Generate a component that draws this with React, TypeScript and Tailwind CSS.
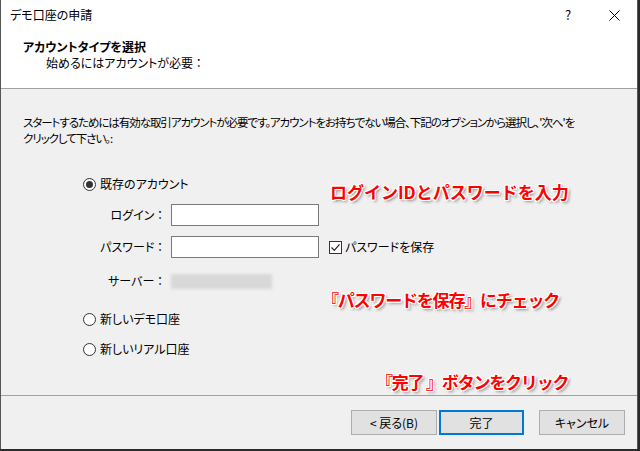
import React from "react";

const font = { fontFamily: '"Noto Sans CJK JP", "Noto Sans", sans-serif' };

function Radio({ checked, label }: { checked?: boolean; label: string }) {
  return (
    <div className="flex items-center gap-[4px] h-[16px]">
      <div className="w-[13px] h-[13px] rounded-full border border-[#333] bg-white flex items-center justify-center">
        {checked && <div className="w-[7px] h-[7px] rounded-full bg-[#333]" />}
      </div>
      <span className="text-[12px] text-black leading-[16px]">{label}</span>
    </div>
  );
}

const ann =
  "absolute text-[#ff0000] font-bold text-[17px] leading-[20px] whitespace-nowrap [text-shadow:1px_0_0_#fff,-1px_0_0_#fff,0_1px_0_#fff,0_-1px_0_#fff,1px_1px_0_#fff,-1px_-1px_0_#fff,1px_-1px_0_#fff,-1px_1px_0_#fff,2px_2px_3px_#888]";

export default function App() {
  return (
    <div className="w-[640px] h-[451px] bg-[#2a2a2a] relative overflow-hidden" style={font}>
      <div className="absolute left-0 top-0 w-[638px] h-[449px] border-l border-r border-[#555] bg-[#f0f0f0] flex flex-col [font-feature-settings:'palt']">
        {/* title bar */}
        <div className="h-[30px] bg-white flex items-center pl-[9px] shrink-0">
          <span className="text-[12px] text-black">デモ口座の申請</span>
          <div className="flex-1" />
          <span className="text-[13px] text-black w-[46px] text-center ml-[4px]">?</span>
          <span className="w-[46px] flex justify-center">
            <svg width="11" height="11" viewBox="0 0 11 11">
              <path d="M0.5 0.5L10.5 10.5M10.5 0.5L0.5 10.5" stroke="#000" strokeWidth="1" />
            </svg>
          </span>
        </div>
        {/* header */}
        <div className="h-[59px] bg-white border-b border-[#a0a0a0] pl-[22px] pt-[9px] shrink-0">
          <div className="text-[12px] font-bold leading-[16px] text-black">アカウントタイプを選択</div>
          <div className="text-[12px] leading-[16px] text-black pl-[23px]">始めるにはアカウントが必要 ：</div>
        </div>
        {/* body */}
        <div className="flex-1 relative">
          <div className="pl-[22px] pt-[25px] text-[11.5px] leading-[16px] tracking-[-1.05px] text-black whitespace-nowrap">
            スタートするためには有効な取引アカウントが必要です。アカウントをお持ちでない場合、下記のオプションから選択し、'次へ'を
            <br />
            クリックして下さい。:
          </div>
          <div className="pl-[82px] pt-[30px] flex flex-col">
            <Radio checked label="既存のアカウント" />
            <div className="mt-[12px] flex flex-col gap-[10px]">
              <div className="flex items-center">
                <span className="w-[88px] text-right pr-[8px] text-[12px]">ログイン ：</span>
                <div className="w-[148px] h-[22px] bg-white border border-[#7a7a7a]" />
              </div>
              <div className="flex items-center">
                <span className="w-[88px] text-right pr-[8px] text-[12px]">パスワード ：</span>
                <div className="w-[148px] h-[22px] bg-white border border-[#7a7a7a]" />
                <div className="ml-[10px] flex items-center gap-[3px]">
                  <div className="w-[13px] h-[13px] border border-[#333] bg-white flex items-center justify-center">
                    <svg width="11" height="11" viewBox="0 0 11 11">
                      <path d="M1.5 5.5L4.3 8.3L9.5 2.3" stroke="#222" strokeWidth="1.2" fill="none" />
                    </svg>
                  </div>
                  <span className="text-[12px]">パスワードを保存</span>
                </div>
              </div>
              <div className="flex items-center mt-[4px]">
                <span className="w-[88px] text-right pr-[8px] text-[12px] text-black">サーバー ：</span>
                <div className="w-[101px] h-[15px] bg-[#d8d8d8] blur-[1.5px]" />
              </div>
            </div>
            <div className="mt-[21px] flex flex-col gap-[14px]">
              <Radio label="新しいデモ口座" />
              <Radio label="新しいリアル口座" />
            </div>
          </div>
        </div>
        {/* footer */}
        <div className="h-[54px] border-t border-[#a0a0a0] shrink-0 flex items-start justify-end pt-[14px] pr-[12px]">
          <div className="flex">
            <button className="w-[86px] h-[25px] bg-[#e1e1e1] border border-[#adadad] text-[12px] text-black">&lt; 戻る(B)</button>
            <button className="ml-[2px] w-[85px] h-[25px] bg-[#e1e1e1] border-2 border-[#0078d7] text-[12px] text-black">完了</button>
            <button className="ml-[15px] w-[86px] h-[25px] bg-[#e1e1e1] border border-[#adadad] text-[12px] text-black">キャンセル</button>
          </div>
        </div>
      </div>
      {/* annotations */}
      <div className={ann} style={{ left: 330, top: 182 }}>ログインIDとパスワードを入力</div>
      <div className={`${ann} tracking-[-1.2px]`} style={{ left: 322, top: 290 }}>『パスワードを保存』にチェック</div>
      <div className={`${ann} tracking-[-1.2px]`} style={{ left: 376, top: 372 }}>『完了 』ボタンをクリック</div>
    </div>
  );
}
